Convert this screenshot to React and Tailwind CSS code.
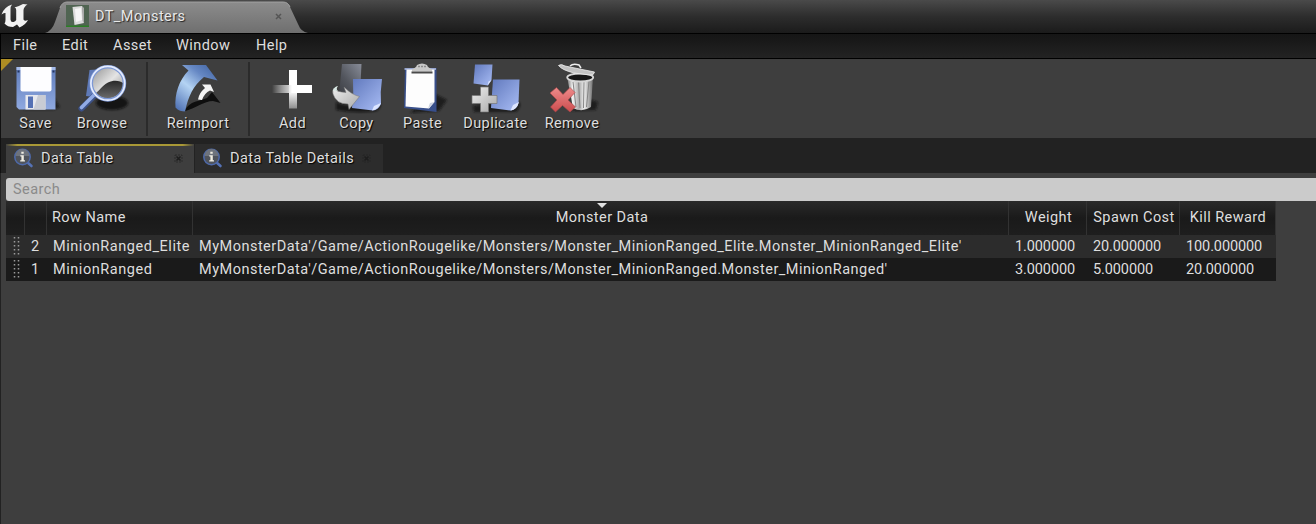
import React from 'react';

function Defs() {
  return (
    <svg className="absolute h-0 w-0" aria-hidden="true">
      <defs>
        <linearGradient id="blue" x1="0" y1="0" x2="1" y2="1">
          <stop offset="0" stopColor="#6179bd" />
          <stop offset="1" stopColor="#a9bdf5" />
        </linearGradient>
        <linearGradient id="steel" x1="0" y1="0" x2="0" y2="1">
          <stop offset="0" stopColor="#5f7cbb" />
          <stop offset="1" stopColor="#8fa9e0" />
        </linearGradient>
        <linearGradient id="silver" x1="0" y1="0" x2="1" y2="1">
          <stop offset="0" stopColor="#eeeeee" />
          <stop offset="1" stopColor="#a8a8a8" />
        </linearGradient>
        <filter id="soft" x="-30%" y="-30%" width="160%" height="160%">
          <feGaussianBlur stdDeviation="1.2" />
        </filter>
      </defs>
    </svg>
  );
}

function Icon({ children }) {
  return (
    <svg viewBox="0 0 52 52" className="h-[52px] w-[52px] shrink-0 -mr-1">
      {children}
    </svg>
  );
}

const icons = {
  Save: (
    <>
      <path d="M38 28L49 45L42 48H12z" fill="#161616" opacity=".75" filter="url(#soft)" />
      <path d="M5.5 5H44.5V47.500H8L5.500 45z" fill="url(#steel)" />
      <path d="M5.500 5H44.500V8H5.500z" fill="#a3b9e8" />
      <path d="M9.500 5H40.500V27.500Q40.500 29.500 38.500 29.500H11.500Q9.500 29.500 9.500 27.500z" fill="#fdfdff" />
      <path d="M6.500 8.500h2v2h-2zM41.500 8.500h2v2h-2z" fill="#263760" />
      <path d="M14.500 33H34.500V47.500H14.500z" fill="#e6e8ee" />
      <path d="M17 34.500H22V46H17z" fill="#5571b4" />
      <path d="M27 33H34.500V47.500H22.500z" fill="#c9ccd4" />
    </>
  ),
  Browse: (
    <>
      <defs>
        <linearGradient id="lens" x1="0" y1="0" x2="1" y2="1">
          <stop offset="0" stopColor="#8d8d8d" />
          <stop offset=".5" stopColor="#e4e4e4" />
          <stop offset="1" stopColor="#777" />
        </linearGradient>
        <linearGradient id="lensDark" x1="0" y1="0" x2="0" y2="1">
          <stop offset="0" stopColor="#282828" />
          <stop offset="1" stopColor="#6a6a6a" />
        </linearGradient>
      </defs>
      <ellipse cx="34" cy="41" rx="16" ry="7" fill="#0c0c0c" opacity=".85" filter="url(#soft)" />
      <path d="M11.500 8L25 7L22 36L8 34z" fill="#5f7ab8" />
      <path d="M17 33L3.500 46.500" stroke="#3c5187" strokeWidth="6" strokeLinecap="round" />
      <path d="M17 32L3.500 45.500" stroke="#91abe6" strokeWidth="3.600" strokeLinecap="round" />
      <circle cx="29.800" cy="21.300" r="16.700" fill="url(#lens)" />
      <path d="M18 31C21 29 24 24 30 20.500C36 17.500 42 18.500 46 21.500A16.300 16.300 0 0 1 18 31z" fill="url(#lensDark)" />
      <circle cx="29.800" cy="21.300" r="16.600" fill="none" stroke="#7d98d5" strokeWidth="3.600" />
      <circle cx="29.800" cy="21.300" r="16.900" fill="none" stroke="#e6edff" strokeWidth="1.700" />
    </>
  ),
  Reimport: (
    <>
      <defs>
        <linearGradient id="arc" x1=".85" y1="0" x2=".1" y2="1">
          <stop offset="0" stopColor="#4568a6" />
          <stop offset=".25" stopColor="#6688c4" />
          <stop offset=".55" stopColor="#b4d3f3" />
          <stop offset="1" stopColor="#4f72b5" />
        </linearGradient>
      </defs>
      <path d="M10 49.500C14 43 18 40 24 39L33 36L38 30L46.500 41L39 39C30 39 22 46 10 49.500z" fill="#0e0e0e" />
      <path d="M8 3H32L43.500 18.500L30 15C19 24 14.500 34 11 49.500C8 49.500 4 48.500 1.500 45.500C0.500 32 5 18 14.500 8.500z" fill="url(#arc)" />
      <path d="M28 22.500L36.500 22.500L40 30L36 28.500Q30.500 31 28 38L24 37.500Q25 31 31 26z" fill="#f4f4f4" />
    </>
  ),
  Add: (
    <>
      <defs>
        <linearGradient id="fadeX">
          <stop offset="0" stopColor="#fff" stopOpacity="0" />
          <stop offset=".4" stopColor="#ddd" stopOpacity=".85" />
          <stop offset=".5" stopColor="#fff" />
        </linearGradient>
        <linearGradient id="fadeY" x1="0" y1="0" x2="0" y2="1">
          <stop offset="0" stopColor="#fff" />
          <stop offset=".55" stopColor="#fff" />
          <stop offset="1" stopColor="#8d8d8d" />
        </linearGradient>
      </defs>
      <path d="M21 8H29V46.500H21z" fill="url(#fadeY)" />
      <path d="M4 23H44V31H4z" fill="url(#fadeX)" />
    </>
  ),
  Copy: (
    <>
      <defs>
        <linearGradient id="old" x1="1" y1="0" x2="0" y2="1">
          <stop offset="0" stopColor="#888c98" />
          <stop offset=".6" stopColor="#53565e" />
          <stop offset="1" stopColor="#3d3f45" />
        </linearGradient>
      </defs>
      <path d="M4 40Q20 48 46 38Q52 43 45 49Q25 52 4 48z" fill="#111" opacity=".75" filter="url(#soft)" />
      <path d="M10 2H29.500L28 32H7z" fill="url(#old)" />
      <path d="M21 17H50Q48 30 49 42Q46 48 41 48.500L20 46Q22 32 21 17z" fill="url(#blue)" />
      <path d="M49 41L42 44L40 48.500Q46 48 49 41z" fill="#dce5ff" />
      <path d="M2 26Q4 30 14 30.500L12 25Q20 33 27.500 34.500L17 47.500L16 42Q4 42 1 32Q0 28 2 26z" fill="url(#silver)" stroke="#777" strokeWidth=".5" />
      <path d="M1 29Q2 24.500 6 24Q3.500 27 6 29Q3 28 1 29z" fill="#d9e9e3" />
    </>
  ),
  Paste: (
    <>
      <path d="M35 31L49 38L41 49L12 51z" fill="#151515" opacity=".8" filter="url(#soft)" />
      <path d="M7 6H38.500V50L6 46z" fill="#384f8b" />
      <path d="M6.500 6H38V8H6.500z" fill="#96a4cc" />
      <path d="M8.500 7.500H36.500V40L31 46.500L7.500 44.500z" fill="#fdfdfd" />
      <path d="M36.500 40L32 41L30 46.500z" fill="#cbd1df" />
      <path d="M14 9.500V7Q18 6 19 3Q24 0 29 3Q30 6 34 7V9.500z" fill="#c8c8c8" />
      <path d="M20 4.500h8" stroke="#8b8b8b" strokeWidth="1.500" strokeDasharray="2 1" />
      <path d="M13.500 10.500H34.500" stroke="#4a4a4a" strokeWidth="2" />
    </>
  ),
  Duplicate: (
    <>
      <path d="M2 44Q25 40 47 39Q52 43 45 50H3z" fill="#121212" opacity=".8" filter="url(#soft)" />
      <path d="M4 2.500H21.500L20.500 18L17 23.500L2.500 21.500z" fill="url(#blue)" />
      <path d="M20.500 18L17.500 19.500L16.500 23.500z" fill="#dce5ff" />
      <path d="M22 17.500H48.500L47.500 41Q45 48 40 48.500L20 46z" fill="url(#blue)" />
      <path d="M48 40L42 43L39.500 48.500Q46 48 48 40z" fill="#dce5ff" />
      <path d="M9.500 25H17.500V33.500H26V41.500H17.500V50H9.500V41.500H1V33.500H9.500z" fill="url(#silver)" stroke="#777" strokeWidth=".7" />
    </>
  ),
  Remove: (
    <>
      <defs>
        <linearGradient id="can">
          <stop offset="0" stopColor="#7f7f7f" />
          <stop offset=".2" stopColor="#f2f2f2" />
          <stop offset=".45" stopColor="#a9a9a9" />
          <stop offset=".65" stopColor="#f0f0f0" />
          <stop offset="1" stopColor="#707070" />
        </linearGradient>
        <linearGradient id="red" x1="0" y1="0" x2="0" y2="1">
          <stop offset="0" stopColor="#ee8b8b" />
          <stop offset="1" stopColor="#cc4c4e" />
        </linearGradient>
      </defs>
      <path d="M40 37L50 40L48 48L22 49z" fill="#151515" opacity=".8" filter="url(#soft)" />
      <path d="M19.500 17L45 15L43 45Q34 51 25 46z" fill="url(#can)" />
      <path d="M25 20L28 45M30.500 20L32 46M36 20L35.500 46M41 19L38.500 45" stroke="#858585" strokeWidth="1" />
      <ellipse cx="32.200" cy="15.500" rx="13" ry="4" fill="#171717" stroke="#d6d6d6" strokeWidth="1.800" />
      <path d="M10.500 3.500Q13 1.500 17 4L46.500 10Q46 13.500 42 13L26 11Q14 8 10.500 3.500z" fill="#c3c3c3" stroke="#efefef" strokeWidth=".8" />
      <path d="M22 4Q25 1 31 3L33 6" fill="none" stroke="#eee" strokeWidth="1.500" />
      <path d="M2 31L8.500 25.500L15 32.500L22 25.500L27 30.500L20 38L27.500 45L22 50L14.500 43.500L7.500 50L2.500 45L9 38z" fill="url(#red)" stroke="#a84547" strokeWidth=".6" />
    </>
  ),
};

function Tool({ name, className }) {
  return (
    <button className={`flex shrink-0 flex-col items-center pt-[3px] ${className}`}>
      <Icon>{icons[name]}</Icon>
      <span className="mt-[-1px] pl-px leading-[22px] whitespace-nowrap [text-shadow:1px_1px_1px_#000]">{name}</span>
    </button>
  );
}

function Separator({ className }) {
  return <div className={`mt-[3px] h-[74px] w-[2px] shrink-0 bg-[#2b2b2b] ${className}`} />;
}

function InfoIcon() {
  return (
    <svg viewBox="0 0 22 22" className="h-[22px] w-[22px] shrink-0">
      <path d="M14 14L18.500 18" stroke="#5572b5" strokeWidth="2.600" strokeLinecap="round" />
      <circle cx="9.500" cy="9" r="7.700" fill="#50545c" stroke="#4e6aab" strokeWidth="1.500" />
      <path d="M2.500 8A7 7 0 0 1 16.500 8z" fill="#6e737c" />
      <path d="M8.300 3.800h2.400v2H8.300zM7.300 7.200h3.500v5H12v1.400H7.200v-1.400h1.200V8.600H7.300z" fill="#f0ede2" />
    </svg>
  );
}

function PanelClose() {
  return (
    <svg viewBox="0 0 9 9" className="ml-px h-[9px] w-[9px] shrink-0">
      <path d="M1 1h7v7H1z" fill="none" stroke="#222" strokeDasharray="2 1" opacity=".7" />
      <path d="M2.500 2.500l4 4M6.500 2.500l-4 4" stroke="#1d1d1d" strokeWidth="1.500" />
    </svg>
  );
}

const columns = 'grid grid-cols-[19px_22px_146px_816px_78px_93px_96px]';

const rows = [
  ['2', 'MinionRanged_Elite', "MyMonsterData'/Game/ActionRougelike/Monsters/Monster_MinionRanged_Elite.Monster_MinionRanged_Elite'", '1.000000', '20.000000', '100.000000', 'bg-[#2c2c2c]'],
  ['1', 'MinionRanged', "MyMonsterData'/Game/ActionRougelike/Monsters/Monster_MinionRanged.Monster_MinionRanged'", '3.000000', '5.000000', '20.000000', 'bg-[#1a1a1a]'],
];

function Grip() {
  return (
    <svg viewBox="0 0 18 23" className="h-[23px] w-[18px]">
      <path d="M8.500 2v20M12.500 2v20" stroke="#9a9a9a" strokeWidth="1.500" strokeDasharray="1.500 2.500" />
    </svg>
  );
}

function HeaderCell({ children, className = '' }) {
  return (
    <div className={`flex items-center border-r border-[#323232] whitespace-nowrap ${className}`}>{children}</div>
  );
}

export default function App() {
  return (
    <div className="flex h-[524px] w-[1316px] flex-col overflow-hidden bg-[#3e3e3e] font-['Roboto',sans-serif] text-[14.5px] tracking-[0.43px] text-[#dedede]">
      <Defs />
      <header className="flex h-[33px] shrink-0 bg-linear-to-b from-[#4a4a4a] via-[#2d2d2d] to-[#1b1b1b]">
        <svg viewBox="0 0 45 33" className="h-[33px] w-[45px] shrink-0">
          <path d="M1.500 14.500Q4 7 12 4.500Q10 7 10.500 9.500V19.500Q10.700 22.500 13.500 22Q15.500 21.500 16.200 20V10Q16.200 7.500 14.500 7.500Q19 6 23 4L27.500 4.500Q24 6.500 23.500 10V19.500Q24 21.500 28 20Q25.500 25 19.500 27.500L17 24.500L13 27Q7.500 27 4.500 23.500Q5.500 22 5.500 20V13Q3.500 12.500 1.500 14.500z" fill="#f2f2f2" />
        </svg>
        <div className="grid h-[33px] w-[264px] shrink-0">
          <svg viewBox="0 0 264 33" className="col-start-1 row-start-1 h-[33px] w-[264px]">
            <defs>
              <linearGradient id="tab" x1="0" y1="0" x2="0" y2="1">
                <stop offset="0" stopColor="#8c8c8c" />
                <stop offset="1" stopColor="#6f6f6f" />
              </linearGradient>
            </defs>
            <path d="M0 33Q7 31 10 22L15 8Q17 2 22 2H238Q243 2 245 7L253 24Q256 32 263 33z" fill="url(#tab)" />
            <path d="M15 8Q17 2 22 2H238Q243 2 245 7" fill="none" stroke="#a1a1a1" />
          </svg>
          <div className="z-10 col-start-1 row-start-1 flex items-center pl-[21px]">
            <svg viewBox="0 0 23 23" className="h-[23px] w-[23px] shrink-0">
              <path d="M0 0h23v22H0z" fill="#506452" />
              <path d="M0 20.500h23V22H0z" fill="#2b7f25" />
              <path d="M6.500 2L16 1L18 18L8.500 20z" fill="#dcdcdc" />
              <path d="M9 4L15 3L16 15L10 17z" fill="#f5f5f5" />
              <path d="M16 1L18 3V18L16.500 16z" fill="#aaa" />
            </svg>
            <span className="ml-[6px] w-[178px] text-[#e8e8e8] [text-shadow:1px_1px_1px_#222]">DT_Monsters</span>
            <svg viewBox="0 0 7 7" className="ml-[2px] h-[7px] w-[7px]"><path d="M1 1l5 5M6 1l-5 5" stroke="#555" strokeWidth="1.500" /></svg>
          </div>
        </div>
      </header>
      <nav className="flex h-[26px] shrink-0 items-center border-y border-l border-black bg-linear-to-b from-[#151515] to-[#232323] leading-[22px] pb-px">
        <span className="ml-3 w-[49px]">File</span>
        <span className="w-[51px]">Edit</span>
        <span className="w-[63px]">Asset</span>
        <span className="w-[80px]">Window</span>
        <span>Help</span>
      </nav>
      <section className="flex h-[79px] shrink-0 border-l border-[#111] bg-[#3e3e3e]">
        <svg viewBox="0 0 12 12" className="h-3 w-3 shrink-0 -mr-2"><path d="M0 0h12L0 12z" fill="#ad8d24" /></svg>
        <Tool name="Save" className="w-[60px]" />
        <Tool name="Browse" className="w-[73px]" />
        <Separator className="mr-[9px] ml-[8px]" />
        <Tool name="Reimport" className="w-[81px]" />
        <Separator className="mr-[10px] ml-[10px]" />
        <Tool name="Add" className="w-[64px]" />
        <Tool name="Copy" className="w-[64px]" />
        <Tool name="Paste" className="w-[68px]" />
        <Tool name="Duplicate" className="w-[78px]" />
        <Tool name="Remove" className="w-[75px]" />
      </section>
      <div className="flex h-[35px] shrink-0 items-end gap-px border-l border-[#111] bg-[#222] pl-[5px]">
        <div className="flex h-[29px] w-[188px] flex-col bg-[#3e3e3e]">
          <div className="h-[2px] shrink-0 bg-[linear-gradient(to_right,#3e3e3e,#a99836_6%,#a99836_94%,#3e3e3e)]" />
          <div className="flex flex-1 items-center pb-[2px] pl-[7px]">
            <InfoIcon />
            <span className="ml-[6px] w-[132px] [text-shadow:1px_1px_1px_#000]">Data Table</span>
            <PanelClose />
          </div>
        </div>
        <div className="flex h-[29px] w-[188px] items-center bg-[#2c2c2c] pl-[7px]">
          <InfoIcon />
          <span className="ml-[6px] w-[131px] whitespace-nowrap [text-shadow:1px_1px_1px_#000]">Data Table Details</span>
          <PanelClose />
        </div>
      </div>
      <main className="flex flex-1 flex-col border-l border-[#222] pt-[5px] pl-[5px]">
        <div className="flex h-[23px] shrink-0 items-center rounded-l-[3px] bg-[#cbcbcb] pl-[7px] text-[#8a8a8a]">Search</div>
        <div className="flex w-[1270px] flex-col">
          <div className={`${columns} h-[34px] bg-linear-to-b from-[#2a2a2a] via-[#1a1a1a] to-[#1e1e1e] leading-[22px]`}>
            <HeaderCell />
            <HeaderCell />
            <HeaderCell className="pl-[5px]">Row Name</HeaderCell>
            <HeaderCell className="relative justify-center pl-[3px]">
              <svg viewBox="0 0 10 5" className="absolute top-[2px] left-[404px] h-[5px] w-[10px]"><path d="M0 0h10L5 5z" fill="#e2e2e2" /></svg>
              Monster Data
            </HeaderCell>
            <HeaderCell className="justify-center pl-[2px]">Weight</HeaderCell>
            <HeaderCell className="justify-center pl-[2px]">Spawn Cost</HeaderCell>
            <HeaderCell className="justify-center pl-px">Kill Reward</HeaderCell>
          </div>
          {rows.map(([id, name, data, weight, cost, reward, bg]) => (
            <div key={id} className={`${columns} h-[23px] items-center whitespace-nowrap ${bg}`}>
              <Grip />
              <span className="pl-[6px]">{id}</span>
              <span className="pl-[6px] tracking-[0.55px]">{name}</span>
              <span className="pl-[6px] tracking-[0.49px]">{data}</span>
              <span className="pl-[6px] tracking-[-0.1px]">{weight}</span>
              <span className="pl-[6px] tracking-[-0.1px]">{cost}</span>
              <span className="pl-[6px] tracking-[-0.1px]">{reward}</span>
            </div>
          ))}
        </div>
      </main>
    </div>
  );
}
